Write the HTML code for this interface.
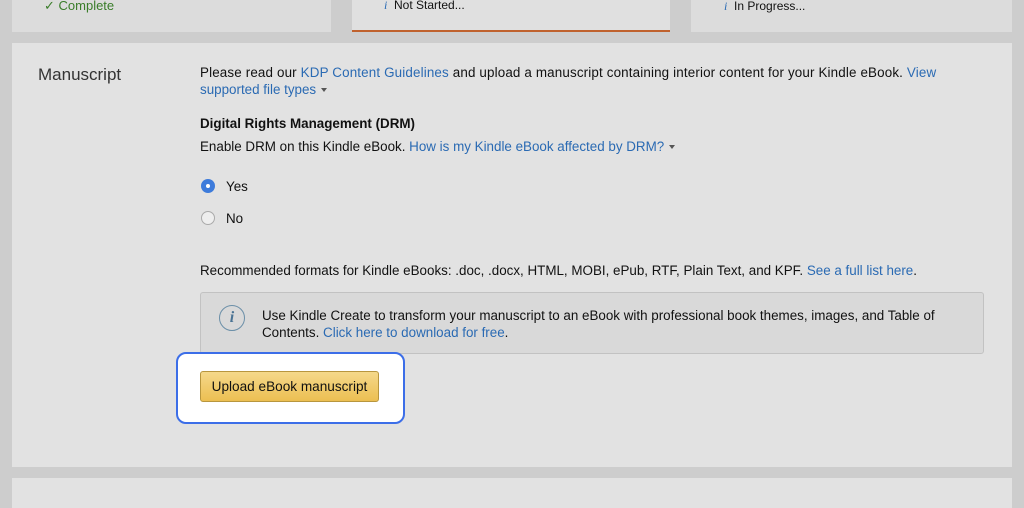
<!DOCTYPE html>
<html><head><meta charset="utf-8"><style>
*{margin:0;padding:0;box-sizing:border-box}
body{width:1024px;height:504px;background:#cdcdcd;font-family:"Liberation Sans",sans-serif;color:#111;position:relative;overflow:hidden;font-size:13.4px}
.a{position:absolute}
.card{background:#dcdcdc;top:0;height:32px}
a,.l{color:#2a6ab3;text-decoration:none}
.t{position:absolute;left:200px;white-space:nowrap;line-height:17px}
.caret{display:inline-block;width:0;height:0;border-left:3.5px solid transparent;border-right:3.5px solid transparent;border-top:4px solid #555;vertical-align:middle;margin-left:5px}
</style></head><body>
<div class="a card" style="left:12px;width:319px"></div>
<div class="a card" style="left:352px;width:318px;background:#e0e0e0;border-bottom:2px solid #c0622e"></div>
<div class="a card" style="left:691px;width:321px"></div>
<div class="a" style="left:44px;top:-2px;color:#3a7d2a;font-size:13px">✓ <span style="color:#3a7d2a">Complete</span></div>
<div class="a" style="left:384px;top:-2px;font-size:12px"><i style="color:#2a6ab3;font-family:'Liberation Serif',serif">i</i>&nbsp;&nbsp;Not Started...</div>
<div class="a" style="left:724px;top:-1px;font-size:12px"><i style="color:#2a6ab3;font-family:'Liberation Serif',serif">i</i>&nbsp;&nbsp;In Progress...</div>
<div class="a" style="left:12px;top:43px;width:1000px;height:424px;background:#e2e2e2"></div>
<div class="a" style="left:12px;top:478px;width:1000px;height:30px;background:#e2e2e2"></div>
<div class="a" style="left:38px;top:65px;font-size:17px;color:#333">Manuscript</div>
<div class="t" style="top:64px;letter-spacing:0.15px">Please read our <a>KDP Content Guidelines</a> and upload a manuscript containing interior content for your Kindle eBook. <a>View</a></div>
<div class="t" style="top:81px"><a>supported file types</a><span class="caret"></span></div>
<div class="t" style="top:115px;font-weight:bold">Digital Rights Management (DRM)</div>
<div class="t" style="top:138px">Enable DRM on this Kindle eBook. <a>How is my Kindle eBook affected by DRM?</a><span class="caret"></span></div>
<div class="a" style="left:201px;top:179px;width:14px;height:14px;border-radius:50%;background:#3d7bdb;"><div class="a" style="left:5px;top:5px;width:4px;height:4px;border-radius:50%;background:#fff"></div></div>
<div class="t" style="left:226px;top:178px">Yes</div>
<div class="a" style="left:201px;top:211px;width:14px;height:14px;border-radius:50%;border:1px solid #aaa;background:#eee"></div>
<div class="t" style="left:226px;top:210px">No</div>
<div class="t" style="top:262px">Recommended formats for Kindle eBooks: .doc, .docx, HTML, MOBI, ePub, RTF, Plain Text, and KPF. <a>See a full list here</a>.</div>
<div class="a" style="left:200px;top:292px;width:784px;height:62px;background:#d9d9d9;border:1px solid #c2c2c2;border-radius:3px"></div>
<div class="a" style="left:219px;top:305px;width:26px;height:26px;border-radius:50%;border:1.5px solid #6b8fa8;color:#4a7394;font-family:'Liberation Serif',serif;font-style:italic;font-weight:bold;font-size:16px;text-align:center;line-height:23px">i</div>
<div class="t" style="left:262px;top:307px">Use Kindle Create to transform your manuscript to an eBook with professional book themes, images, and Table of</div>
<div class="t" style="left:262px;top:324px">Contents. <a>Click here to download for free</a>.</div>
<div class="a" style="left:176px;top:352px;width:229px;height:72px;background:#fff;border:2px solid #3c6ee8;border-radius:10px"></div>
<div class="a" style="left:200px;top:371px;width:179px;height:31px;background:linear-gradient(#f5d88a,#ecbf52);border:1px solid #b8963e;border-radius:3px;text-align:center;line-height:29px;font-size:13.6px">Upload eBook manuscript</div>
</body></html>
